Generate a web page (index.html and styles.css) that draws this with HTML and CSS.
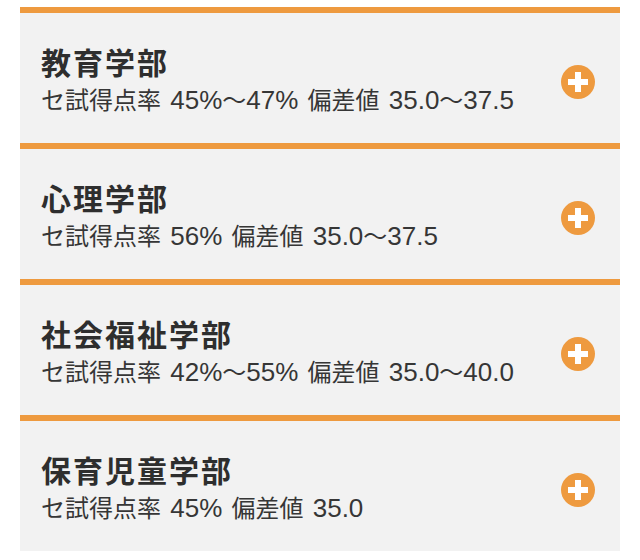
FILE: index.html
```html
<!DOCTYPE html>
<html lang="ja">
<head>
<meta charset="utf-8">
<link rel="stylesheet" href="styles.css">
</head>
<body>
<ul class="list">
  <li class="card">
    <div class="info">
      <h2 class="title">教育学部</h2>
      <p class="sub"><span class="jp">セ試得点率</span> 45%<span class="jp">～</span>47% <span class="jp">偏差値</span> 35.0<span class="jp">～</span>37.5</p>
    </div>
    <svg class="plus" viewBox="0 0 34 34" aria-hidden="true"><circle cx="17" cy="17" r="17" fill="#ee9a3f"/><path d="M14 7h6v7h7v6h-7v7h-6v-7H7v-6h7z" fill="#fff"/></svg>
  </li>
  <li class="card">
    <div class="info">
      <h2 class="title">心理学部</h2>
      <p class="sub"><span class="jp">セ試得点率</span> 56% <span class="jp">偏差値</span> 35.0<span class="jp">～</span>37.5</p>
    </div>
    <svg class="plus" viewBox="0 0 34 34" aria-hidden="true"><circle cx="17" cy="17" r="17" fill="#ee9a3f"/><path d="M14 7h6v7h7v6h-7v7h-6v-7H7v-6h7z" fill="#fff"/></svg>
  </li>
  <li class="card">
    <div class="info">
      <h2 class="title">社会福祉学部</h2>
      <p class="sub"><span class="jp">セ試得点率</span> 42%<span class="jp">～</span>55% <span class="jp">偏差値</span> 35.0<span class="jp">～</span>40.0</p>
    </div>
    <svg class="plus" viewBox="0 0 34 34" aria-hidden="true"><circle cx="17" cy="17" r="17" fill="#ee9a3f"/><path d="M14 7h6v7h7v6h-7v7h-6v-7H7v-6h7z" fill="#fff"/></svg>
  </li>
  <li class="card">
    <div class="info">
      <h2 class="title">保育児童学部</h2>
      <p class="sub"><span class="jp">セ試得点率</span> 45% <span class="jp">偏差値</span> 35.0</p>
    </div>
    <svg class="plus" viewBox="0 0 34 34" aria-hidden="true"><circle cx="17" cy="17" r="17" fill="#ee9a3f"/><path d="M14 7h6v7h7v6h-7v7h-6v-7H7v-6h7z" fill="#fff"/></svg>
  </li>
</ul>
</body>
</html>
```
FILE: styles.css
```css
html, body {
  margin: 0;
  padding: 0;
  background: #ffffff;
}
body {
  font-family: "Liberation Sans", "Noto Sans CJK JP", sans-serif;
  color: #333333;
}
.list {
  list-style: none;
  margin: 0;
  padding: 7px 20px 0;
}
.card {
  height: 130px;
  border-top: 6px solid #ee9a3f;
  background: #f2f2f2;
  display: flex;
  align-items: center;
  padding: 0 25px 0 21px;
}
.info {
  flex: 1;
  margin-top: 2px;
}
.title {
  margin: 0;
  font-size: 30px;
  line-height: 36px;
  font-weight: 700;
  letter-spacing: 2px;
  color: #2e2e2e;
}
.sub {
  margin: 3px 0 0;
  height: 28px;
  font-size: 26px;
  line-height: 28px;
  font-weight: 400;
  word-spacing: 2px;
  color: #363636;
  white-space: nowrap;
}
.jp {
  font-family: "Noto Sans CJK JP", sans-serif;
  font-size: 24px;
  line-height: 28px;
}
.plus {
  width: 34px;
  height: 34px;
  flex: none;
  margin-top: 7px;
}
```
